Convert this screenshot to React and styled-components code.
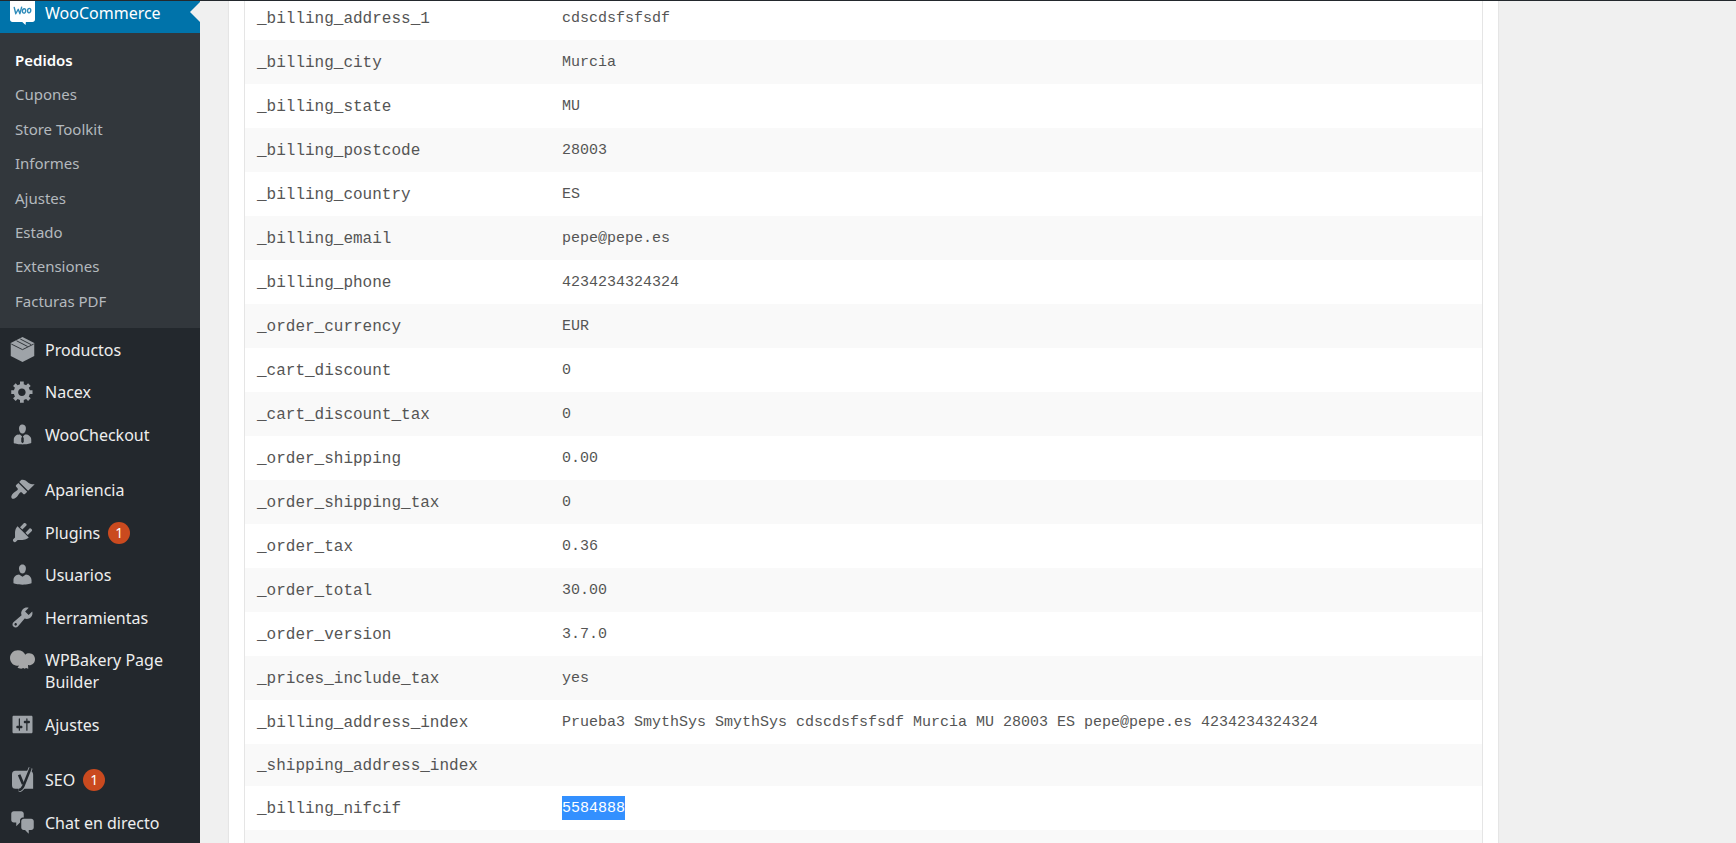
import React from 'react';
import styled, { createGlobalStyle } from 'styled-components';

const GlobalStyle = createGlobalStyle`
  * { box-sizing: border-box; }
  body {
    margin: 0;
    background: #f0f0f0;
    font-family: "Noto Sans", "Open Sans", sans-serif;
    overflow: hidden;
  }
`;

const Page = styled.div`
  display: flex;
  height: 100vh;
  overflow: hidden;
  border-top: 1px solid #23282d;
`;

const Sidebar = styled.nav`
  flex: 0 0 200px;
  overflow: hidden;
  background: #23282d;
`;

const MenuScroll = styled.div`
  margin-top: -10px;
`;

const MenuGroup = styled.ul`
  display: flex;
  flex-direction: column;
  list-style: none;
  margin: 0 0 13px;
  padding: 0;
  min-height: ${(p) => p.$height || 0}px;
`;

const MenuItem = styled.li`
  flex: 1 1 auto;
`;

const MenuLink = styled.a`
  position: relative;
  display: flex;
  align-items: flex-start;
  padding: 11px 20px 9px 10px;
  gap: 10px;
  font-size: 16px;
  line-height: 22px;
  text-decoration: none;
  color: ${(p) => (p.$current ? '#fff' : '#eee')};
  background: ${(p) => (p.$current ? '#0073aa' : 'transparent')};
`;

const CurrentArrow = styled.span`
  position: absolute;
  right: 0;
  top: 11px;
  border: 10px solid transparent;
  border-left-width: 0;
  border-right-color: #f0f0f0;
`;

const Icon = styled.svg`
  flex: none;
  width: 25px;
  height: 25px;
  margin: -2px 0;
  fill: ${(p) => (p.$current ? '#fff' : '#9ea3a8')};
`;

const Label = styled.span`
  display: flex;
  align-items: center;
  gap: 8px;
`;

const Badge = styled.span`
  width: 22px;
  height: 22px;
  border-radius: 11px;
  background: #ca4a1f;
  color: #fff;
  font-size: 14px;
  line-height: 22px;
  text-align: center;
`;

const SubMenu = styled.ul`
  display: grid;
  grid-auto-rows: 1fr;
  min-height: 295px;
  list-style: none;
  margin: 0;
  padding: 10px 0;
  background: #32373c;
`;

const SubLink = styled.a`
  display: block;
  padding: 6px 15px;
  font-size: 15px;
  line-height: 22px;
  text-decoration: none;
  font-weight: ${(p) => (p.$current ? 600 : 400)};
  color: ${(p) => (p.$current ? '#fff' : '#b4b9be')};
`;

const Content = styled.main`
  flex: 1;
  min-width: 0;
  padding: 0 237px 0 28px;
`;

const Panel = styled.section`
  margin-top: -5px;
  padding: 0 15px;
  background: #fff;
  border: solid #e5e5e5;
  border-width: 0 1px;
  box-shadow: 0 1px 1px rgba(0, 0, 0, 0.04);
`;

const MetaTable = styled.table`
  width: 100%;
  table-layout: fixed;
  border-spacing: 0;
  border: solid #e5e5e5;
  border-width: 0 1px;
  color: #555;
  font-family: "Liberation Mono", monospace;
`;

const MetaRow = styled.tr`
  background: ${(p) => (p.$shaded ? '#f9f9f9' : '#fff')};
`;

const KeyCell = styled.th`
  width: 305px;
  padding: 11px 12px 9px;
  text-align: left;
  font-weight: 400;
  font-size: 16px;
  line-height: 22px;
`;

const ValueCell = styled.td`
  padding: 0 12px;
  font-size: 15px;
  line-height: 22px;
`;

const Value = styled.span`
  display: inline-block;
  margin: 10px 0;
  padding-top: 2px;
  vertical-align: top;
  color: ${(p) => (p.$selected ? '#fff' : 'inherit')};
  background: ${(p) => (p.$selected ? '#3390ff' : 'transparent')};
`;

const icons = {
  woo: (
    <>
      <path d="M0 0h20v15.600c0 1.100-.9 2-2 2h-5.300l-.3 2.400-2.600-2.400H2c-1.100 0-2-.9-2-2z" />
      <path
        d="M3.400 6l1.200 5 2-3.600L7.900 11 9.300 5.800M11.400 7c-1.800 0-2 3.500-.3 3.500S13.100 7 11.400 7zM15.500 6.700c-1.800 0-2 3.500-.3 3.500s2-3.500.3-3.500z"
        fill="none"
        stroke="#2f8cba"
        strokeWidth="1.1"
        strokeLinejoin="round"
        strokeLinecap="round"
      />
    </>
  ),
  products: (
    <>
      <path d="M10 0l9.400 4.800v10.400L10 20 .6 15.200V4.800z" />
      <path
        d="M1 5.600l9 4.500 9-4.500M5.200 3l8.900 4.600M8.200 1.600l8.700 4.500"
        fill="none"
        stroke="#23282d"
        strokeWidth=".7"
      />
    </>
  ),
  gear: (
    <path d="M18 12h-2.180c-.17.7-.44 1.350-.81 1.930l1.540 1.540-2.100 2.100-1.540-1.540c-.58.36-1.230.63-1.910.79V19H8v-2.180c-.68-.16-1.330-.43-1.910-.79l-1.540 1.540-2.120-2.120 1.540-1.540c-.36-.58-.63-1.230-.79-1.910H1V9.030h2.170c.16-.7.44-1.350.8-1.940L2.430 5.550l2.100-2.100 1.540 1.540c.58-.37 1.240-.64 1.930-.81V2h3v2.180c.68.16 1.330.43 1.910.79l1.540-1.540 2.120 2.120-1.540 1.540c.36.59.64 1.240.8 1.940H18V12zm-8.500 1.500c1.660 0 3-1.340 3-3s-1.340-3-3-3-3 1.340-3 3 1.340 3 3 3z" />
  ),
  businessman: (
    <path d="M7.300 6l-.03-.19c-.04-.37-.05-.73-.03-1.080.02-.36.1-.71.25-1.040.14-.32.31-.61.52-.86s.49-.46.83-.6c.34-.15.72-.23 1.130-.23.69 0 1.260.2 1.710.59s.76.87.91 1.440.18 1.160.09 1.780l-.03.19c-.01.09-.05.25-.11.48-.05.24-.12.47-.2.69-.08.21-.19.45-.34.72-.14.27-.3.49-.47.69-.18.19-.4.34-.67.48-.27.13-.55.19-.86.19s-.59-.06-.87-.19c-.26-.13-.49-.29-.67-.5-.18-.2-.34-.42-.49-.66-.15-.25-.26-.49-.34-.73-.09-.25-.16-.47-.21-.67-.06-.21-.1-.37-.12-.5zm9.200 6.240c.41.7.5 1.410.5 2.140v2.490c0 .03-.12.08-.29.13-.18.04-.42.13-.97.27-.55.12-1.100.24-1.650.34s-1.190.19-1.950.27c-.75.08-1.460.12-2.130.12-.68 0-1.390-.04-2.140-.12-.75-.07-1.400-.17-1.980-.27-.58-.11-1.080-.23-1.560-.34-.49-.11-.8-.21-1.060-.29L3 16.870v-2.490c0-.75.07-1.460.46-2.150s.81-1.250 1.500-1.680C5.660 10.120 7.190 10 8 10l1.670 1.670L9 13v3l1.020 1.080L11 16v-3l-.68-1.330L11.970 10c.77 0 2.200.07 2.900.52.71.45 1.210 1.020 1.630 1.720z" />
  ),
  appearance: (
    <path d="M14.480 11.060L7.410 3.990l1.500-1.500c.5-.56 2.300-.47 3.510.32 1.210.8 1.430 1.280 2.910 2.100 1.180.64 2.450 1.260 4.450.85zm-.71.71L6.700 4.700 4.930 6.470c-.39.39-.39 1.020 0 1.410l1.060 1.060c.39.39.39 1.030 0 1.420-.6.6-1.430 1.110-2.210 1.690-.35.26-.7.53-1.010.84C1.430 14.230.4 16.080 1.400 17.070c.99 1 2.840-.03 4.180-1.360.31-.31.58-.66.85-1.020.57-.78 1.080-1.610 1.690-2.210.39-.39 1.020-.39 1.410 0l1.060 1.060c.39.39 1.020.39 1.410 0z" />
  ),
  plugins: (
    <path d="M13.110 4.360L9.870 7.600 8 5.730l3.240-3.240c.35-.34 1.050-.2 1.560.32.52.51.66 1.210.31 1.550zm-8 1.770l.91-1.120 9.010 9.010-1.190.84c-.71.71-2.630 1.160-3.820 1.160H6.140L4.900 17.260c-.59.59-1.540.59-2.120 0-.59-.58-.59-1.530 0-2.120l1.240-1.240v-3.880c0-1.130.4-3.190 1.090-3.890zm7.260 3.970l3.240-3.240c.34-.35 1.040-.21 1.550.31.52.51.66 1.210.31 1.550l-3.240 3.250z" />
  ),
  users: (
    <path d="M10 9.250c-2.270 0-2.730-3.440-2.730-3.440C7 4.020 7.820 2 9.970 2c2.160 0 2.980 2.020 2.710 3.810 0 0-.41 3.440-2.680 3.440zm0 2.570L12.720 10c2.390 0 4.520 2.330 4.520 4.530v2.490s-3.650 1.130-7.240 1.130c-3.650 0-7.240-1.130-7.240-1.130v-2.490c0-2.250 1.940-4.480 4.470-4.480z" />
  ),
  tools: (
    <path d="M16.680 9.770c-1.340 1.340-3.300 1.670-4.950.99l-5.410 6.520c-.99.99-2.590.99-3.580 0s-.99-2.590 0-3.570l6.520-5.420c-.68-1.650-.35-3.610.99-4.950 1.280-1.280 3.120-1.620 4.720-1.060l-2.890 2.890 2.820 2.820 2.860-2.870c.53 1.580.18 3.390-1.080 4.650zM3.810 16.210c.4.39 1.040.39 1.430 0 .4-.4.4-1.040 0-1.430-.39-.4-1.030-.4-1.430 0-.39.39-.39 1.030 0 1.430z" />
  ),
  bakery: (
    <path
      fill="#a6a7a8"
      d="M6.300 2.500c3 0 5 1.600 5.900 3.600 1-.9 2.100-1.200 3.300-1.100 2.700.1 4.500 2.200 4.500 4.700 0 2.800-2 4.800-4.800 4.800-.4 0-.5 0-.8-.1l.2 3-1.700-.6-1.300.5-1-.5-1.600.6-1.800-.5-1.200-.4 1.300-1.800c-.7.200-1.100.2-1.700.2C2.700 14.900 0 12 0 8.700c0-3.500 2.700-6.200 6.300-6.200z"
    />
  ),
  settings: (
    <path d="M18 16V4c0-.55-.45-1-1-1H3c-.55 0-1 .45-1 1v12c0 .55.45 1 1 1h14c.55 0 1-.45 1-1zM8 11h1c.55 0 1 .45 1 1s-.45 1-1 1H8v1.500c0 .28-.22.5-.5.5s-.5-.22-.5-.5V13H6c-.55 0-1-.45-1-1s.45-1 1-1h1V5.500c0-.28.22-.5.5-.5s.5.22.5.5V11zm5-2h-1c-.55 0-1-.45-1-1s.45-1 1-1h1V5.500c0-.28.22-.5.5-.5s.5.22.5.5V7h1c.55 0 1 .45 1 1s-.45 1-1 1h-1v5.500c0 .28-.22.5-.5.5s-.5-.22-.5-.5V9z" />
  ),
  seo: (
    <>
      <path d="M4.400 3h11.200c1.600 0 2.900 1.300 2.900 2.900V17.400H4.400a2.800 2.800 0 0 1-2.800-2.800V5.800A2.800 2.800 0 0 1 4.400 3z" />
      <g fill="none">
        <path d="M16.500.8L10.800 15c-.8 2-1.900 3.200-4 3.600" stroke="#9ea3a8" strokeWidth="3.400" />
        <path d="M16.500.8L10.800 15c-.8 2-1.900 3.200-4 3.600" stroke="#23282d" strokeWidth="2" />
        <path d="M7.300 6.200l3.200 7.600" stroke="#23282d" strokeWidth="2.200" />
      </g>
    </>
  ),
  chat: (
    <path d="M11 6h-.82C9.070 6 8 7.200 8 8.160V10l-3 3v-3H3c-1.100 0-2-.9-2-2V3c0-1.100.9-2 2-2h6c1.100 0 2 .9 2 2v3zm0 1h6c1.100 0 2 .9 2 2v5c0 1.100-.9 2-2 2h-2v3l-3-3h-1c-1.100 0-2-.9-2-2V9c0-1.100.9-2 2-2z" />
  ),
};

const submenu = ['Pedidos', 'Cupones', 'Store Toolkit', 'Informes', 'Ajustes', 'Estado', 'Extensiones', 'Facturas PDF'];

const groups = [
  {
    height: 127,
    items: [
      { icon: 'products', label: 'Productos' },
      { icon: 'gear', label: 'Nacex' },
      { icon: 'businessman', label: 'WooCheckout' },
    ],
  },
  {
    height: 277,
    items: [
      { icon: 'appearance', label: 'Apariencia' },
      { icon: 'plugins', label: 'Plugins', count: 1 },
      { icon: 'users', label: 'Usuarios' },
      { icon: 'tools', label: 'Herramientas' },
      { icon: 'bakery', label: 'WPBakery Page Builder' },
      { icon: 'settings', label: 'Ajustes' },
    ],
  },
  {
    height: 85,
    items: [
      { icon: 'seo', label: 'SEO', count: 1 },
      { icon: 'chat', label: 'Chat en directo' },
    ],
  },
];

const meta = [
  ['_billing_address_1', 'cdscdsfsfsdf'],
  ['_billing_city', 'Murcia'],
  ['_billing_state', 'MU'],
  ['_billing_postcode', '28003'],
  ['_billing_country', 'ES'],
  ['_billing_email', 'pepe@pepe.es'],
  ['_billing_phone', '4234234324324'],
  ['_order_currency', 'EUR'],
  ['_cart_discount', '0'],
  ['_cart_discount_tax', '0'],
  ['_order_shipping', '0.00'],
  ['_order_shipping_tax', '0'],
  ['_order_tax', '0.36'],
  ['_order_total', '30.00'],
  ['_order_version', '3.7.0'],
  ['_prices_include_tax', 'yes'],
  ['_billing_address_index', 'Prueba3 SmythSys SmythSys cdscdsfsfsdf Murcia MU 28003 ES pepe@pepe.es 4234234324324'],
  ['_shipping_address_index', ''],
  ['_billing_nifcif', '5584888'],
  ['', ''],
];

const selectedKey = '_billing_nifcif';

function MenuEntry({ icon, label, count, current }) {
  return (
    <MenuLink href="#" $current={current}>
      <Icon viewBox="0 0 20 20" aria-hidden="true" $current={current}>
        {icons[icon]}
      </Icon>
      <Label>
        {label}
        {count && <Badge>{count}</Badge>}
      </Label>
      {current && <CurrentArrow />}
    </MenuLink>
  );
}

export default function App() {
  return (
    <>
      <GlobalStyle />
      <Page>
        <Sidebar>
          <MenuScroll>
            <MenuEntry icon="woo" label="WooCommerce" current />
            <SubMenu>
              {submenu.map((label, i) => (
                <li key={label}>
                  <SubLink href="#" $current={i === 0}>{label}</SubLink>
                </li>
              ))}
            </SubMenu>
            {groups.map((group) => (
              <MenuGroup key={group.items[0].label} $height={group.height}>
                {group.items.map((item) => (
                  <MenuItem key={item.label}>
                    <MenuEntry {...item} />
                  </MenuItem>
                ))}
              </MenuGroup>
            ))}
          </MenuScroll>
        </Sidebar>
        <Content>
          <Panel>
            <MetaTable>
              <tbody>
                {meta.map(([key, value], i) => (
                  <MetaRow key={key} $shaded={i % 2 === 1}>
                    <KeyCell scope="row">{key}</KeyCell>
                    <ValueCell>
                      {value && <Value $selected={key === selectedKey}>{value}</Value>}
                    </ValueCell>
                  </MetaRow>
                ))}
              </tbody>
            </MetaTable>
          </Panel>
        </Content>
      </Page>
    </>
  );
}
